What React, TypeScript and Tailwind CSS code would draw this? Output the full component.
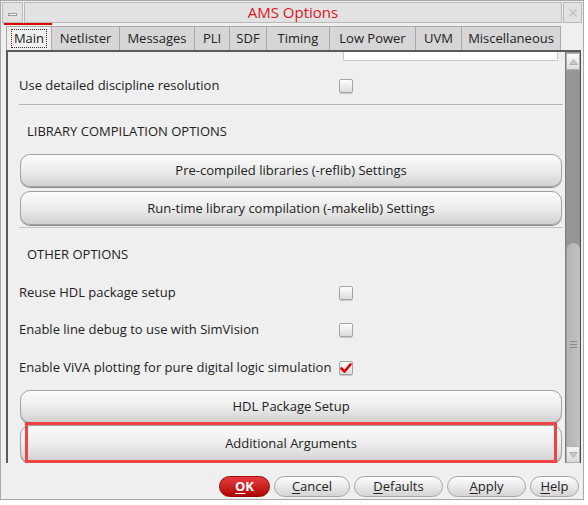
import React from "react";

const tabs = [
  { label: "Main", w: "w-[46px]" },
  { label: "Netlister", w: "w-[68px]" },
  { label: "Messages", w: "w-[75px]" },
  { label: "PLI", w: "w-[35px]" },
  { label: "SDF", w: "w-[37px]" },
  { label: "Timing", w: "w-[63px]" },
  { label: "Low Power", w: "w-[86px]" },
  { label: "UVM", w: "w-[46px]" },
  { label: "Miscellaneous", w: "w-[99px]" },
];

const Check = ({ on = false }: { on?: boolean }) => (
  <div className="w-[14px] h-[14px] rounded-[2px] border border-[#a4a4a4] bg-gradient-to-b from-[#ffffff] to-[#dcdcdc] shadow-[0_1px_0_#c8c8c8] flex items-center justify-center">
    {on && (
      <svg width="12" height="11" viewBox="0 0 12 11">
        <path d="M1.5 5.5 L4.5 8.5 L10.5 1.5" fill="none" stroke="#e00000" strokeWidth="2.6" strokeLinecap="round" strokeLinejoin="round" />
      </svg>
    )}
  </div>
);

const OptionRow = ({ label, on }: { label: string; on?: boolean }) => (
  <div className="h-[24px] flex items-center">
    <span className="w-[320px]">{label}</span>
    <Check on={on} />
  </div>
);

const BigButton = ({ label, className = "" }: { label: string; className?: string }) => (
  <div
    className={`ml-[12px] mr-[3px] rounded-[10px] border border-[#a2a2a2] bg-gradient-to-b from-[#fcfcfc] via-[#ececec] to-[#d2d2d2] shadow-[0_1px_0_#8c8c8c] flex items-center justify-center text-[#222] ${className}`}
  >
    {label}
  </div>
);

const FooterButton = ({ first, rest, w, ok = false }: { first: string; rest: string; w: string; ok?: boolean }) => (
  <div
    className={`${w} h-[21px] rounded-full flex items-center justify-center text-[13px] ${
      ok
        ? "bg-gradient-to-b from-[#e83a3a] to-[#b00000] border border-[#9a0000] text-white font-bold"
        : "bg-gradient-to-b from-[#fdfdfd] to-[#d4d4d4] border border-[#a6a6a6] text-[#222]"
    }`}
  >
    <span className="underline underline-offset-2">{first}</span>
    {rest}
  </div>
);

export default function App() {
  return (
    <div className="w-[588px] h-[505px] bg-white font-['Open_Sans',sans-serif] text-[13px] text-[#222]">
      <div className="w-[584px] h-[500px] border border-[#a8a8a8] bg-[#efefef] flex flex-col pt-[1px] px-[1px]">
        {/* title bar */}
        <div className="flex h-[21px] gap-[1px]">
          <div className="w-[21px] border border-[#b8b8b8] bg-[#e2e2e2] flex items-center justify-center">
            <div className="w-[9px] h-[3px] mt-[3px] border border-[#9a9a9a] bg-white" />
          </div>
          <div className="flex-1 border border-[#b8b8b8] bg-[#e2e2e2] flex items-center justify-center text-[15px] text-[#e0141e]">
            AMS Options
          </div>
          <div className="w-[19px] border border-[#b8b8b8] bg-[#e2e2e2] flex items-center justify-center text-[14px] text-[#c4c4c4] leading-none">
            ✕
          </div>
        </div>
        {/* focus line */}
        <div className="h-[2px] ml-[2px] w-[48px] bg-[#e00000]" />
        {/* tabs */}
        <div className="flex h-[24px] mt-[1px] pl-[4px] text-[13px]">
          {tabs.map((t, i) => (
            <div
              key={t.label}
              className={`${t.w} h-full flex items-center justify-center border-t border-r border-[#a9a9a9] ${
                i === 0 ? "bg-[#efefef] border-l" : "bg-[#d6d6d6]"
              }`}
            >
              {i === 0 ? (
                <span className="border border-dotted border-[#333] px-[2px] leading-[17px]">{t.label}</span>
              ) : (
                t.label
              )}
            </div>
          ))}
        </div>
        {/* content panel */}
        <div className="h-[413px] ml-[4px] mr-[1px] flex border-t-2 border-l-2 border-[#5a5a5a] border-r border-r-[#4a4a4a]">
          <div className="flex-1 overflow-hidden flex flex-col">
            <div className="h-[10px] flex">
              <div className="ml-[335px] w-[215px] h-[9px] bg-white border-b border-x border-[#c8c8c8] rounded-b-[2px]" />
            </div>
            <div className="mt-[10px] h-[28px] pl-[11px] flex items-center">
              <OptionRow label="Use detailed discipline resolution" />
            </div>
            <div className="mt-[4px] ml-[11px] mr-[2px] h-px bg-[#b4b4b4]" />
            <div className="mt-[15px] h-[24px] pl-[19px] flex items-center">LIBRARY COMPILATION OPTIONS</div>
            <BigButton label="Pre-compiled libraries (-reflib) Settings" className="mt-[10px] h-[34px]" />
            <BigButton label="Run-time library compilation (-makelib) Settings" className="mt-[4px] h-[34px]" />
            <div className="mt-[2px] ml-[11px] mr-[2px] h-px bg-[#c4c4c4]" />
            <div className="mt-[15px] h-[24px] pl-[19px] flex items-center">OTHER OPTIONS</div>
            <div className="mt-[14px] pl-[11px]">
              <OptionRow label="Reuse HDL package setup" />
            </div>
            <div className="mt-[13px] pl-[11px]">
              <OptionRow label="Enable line debug to use with SimVision" />
            </div>
            <div className="mt-[14px] pl-[11px]">
              <OptionRow label="Enable ViVA plotting for pure digital logic simulation" on />
            </div>
            <BigButton label="HDL Package Setup" className="mt-[10px] h-[33px] shrink-0" />
            <div className="relative mt-[2px] shrink-0">
              <BigButton label="Additional Arguments" className="h-[38px]" />
              <div className="absolute left-[17px] top-[-3px] w-[532px] h-[41px] border-[3px] border-[#ee4444]" />
            </div>
          </div>
          {/* scrollbar */}
          <div className="w-[15px] flex flex-col bg-[#959595] border-l border-[#7a7a7a]">
            <div className="h-[17px] mt-[1px] bg-gradient-to-b from-[#fbfbfb] to-[#dedede] border border-[#b0b0b0] flex items-center justify-center">
              <svg width="9" height="6" viewBox="0 0 9 6">
                <path d="M0.5 5.5 L4.5 0.5 L8.5 5.5 Z" fill="#c8c8c8" stroke="#a8a8a8" strokeWidth="0.8" />
              </svg>
            </div>
            <div className="flex-1 flex flex-col">
              <div className="h-[173px]" />
              <div className="flex-1 rounded-t-[7px] bg-gradient-to-r from-[#b4b4b4] to-[#c2c2c2] border-l border-[#a0a0a0] flex items-center justify-center">
                <div className="w-[7px] flex flex-col gap-[2px]">
                  <div className="h-px bg-[#8a8a8a]" />
                  <div className="h-px bg-[#8a8a8a]" />
                  <div className="h-px bg-[#8a8a8a]" />
                </div>
              </div>
            </div>
            <div className="h-[17px] bg-gradient-to-b from-[#f4f4f4] to-[#d8d8d8] border border-[#b0b0b0] flex items-center justify-center">
              <svg width="9" height="6" viewBox="0 0 9 6">
                <path d="M0.5 0.5 L4.5 5.5 L8.5 0.5 Z" fill="#c8c8c8" stroke="#a8a8a8" strokeWidth="0.8" />
              </svg>
            </div>
          </div>
        </div>
        {/* footer */}
        <div className="flex-1 flex items-center justify-end gap-[4px] pr-[3px] pt-[11px]">
          <FooterButton first="O" rest="K" w="w-[51px]" ok />
          <FooterButton first="C" rest="ancel" w="w-[76px]" />
          <FooterButton first="D" rest="efaults" w="w-[89px]" />
          <FooterButton first="A" rest="pply" w="w-[79px]" />
          <FooterButton first="H" rest="elp" w="w-[49px]" />
        </div>
      </div>
    </div>
  );
}
